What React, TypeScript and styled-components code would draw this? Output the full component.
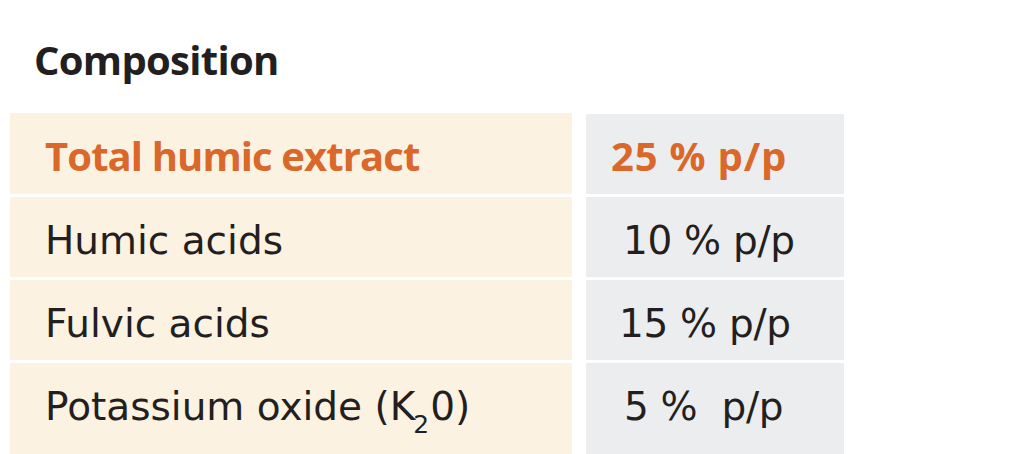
import styled, { createGlobalStyle } from 'styled-components';

const GlobalStyle = createGlobalStyle`
  html, body {
    margin: 0;
    padding: 0;
    background: #ffffff;
  }
  body {
    font-family: 'DejaVu Sans', sans-serif;
    color: #231f20;
  }
`;

const Page = styled.div`
  width: 1024px;
  height: 454px;
  overflow: hidden;
  background: #ffffff;
`;

const Title = styled.h2`
  margin: 0;
  padding: 40px 0 0 34px;
  font-family: 'Open Sans', sans-serif;
  font-weight: 700;
  font-size: 40px;
  line-height: 1;
  letter-spacing: -0.7px;
  color: #231f20;
`;

const Table = styled.div`
  display: grid;
  grid-template-columns: 562px 258px;
  grid-template-rows: 81px 80px 80px 94px;
  column-gap: 14px;
  row-gap: 3px;
  margin: 33px 0 0 10px;
`;

const Cell = styled.div<{ $strong?: boolean }>`
  box-sizing: border-box;
  padding-top: ${(p) => (p.$strong ? '23px' : '24px')};
  line-height: 1;
  white-space: pre;
  font-family: ${(p) =>
    p.$strong ? "'Open Sans', sans-serif" : "'DejaVu Sans', sans-serif"};
  font-weight: ${(p) => (p.$strong ? 700 : 400)};
  font-size: ${(p) => (p.$strong ? '40px' : '39px')};
  color: ${(p) => (p.$strong ? '#d9682a' : '#231f20')};
`;

const LabelCell = styled(Cell)`
  background: #fbf2e2;
  padding-left: 35px;
  letter-spacing: ${(p) => (p.$strong ? '-0.9px' : '0')};
`;

const ValueCell = styled(Cell)<{ $indent: number }>`
  background: #ecedef;
  padding-left: ${(p) => p.$indent}px;
  letter-spacing: ${(p) => (p.$strong ? '0.8px' : '-0.3px')};
  margin-top: ${(p) => (p.$strong ? '1px' : '0')};
  padding-top: ${(p) => (p.$strong ? '22px' : '24px')};
`;

const Sub = styled.span`
  position: relative;
  top: 13px;
  font-size: 0.64em;
  margin: 0 1px 0 -2px;
`;

type Row = {
  label: React.ReactNode;
  value: string;
  indent: number;
  strong?: boolean;
};

const rows: Row[] = [
  { label: 'Total humic extract', value: '25 % p/p', indent: 25, strong: true },
  { label: 'Humic acids', value: '10 % p/p', indent: 37 },
  { label: 'Fulvic acids', value: '15 % p/p', indent: 33 },
  {
    label: (
      <>
        Potassium oxide (K<Sub>2</Sub>0)
      </>
    ),
    value: '5 %\u00a0 p/p',
    indent: 38,
  },
];

export default function App() {
  return (
    <>
      <GlobalStyle />
      <Page>
        <Title>Composition</Title>
        <Table>
          {rows.map((r, i) => (
            <>
              <LabelCell key={`l${i}`} $strong={r.strong}>
                {r.label}
              </LabelCell>
              <ValueCell key={`v${i}`} $strong={r.strong} $indent={r.indent}>
                {r.value}
              </ValueCell>
            </>
          ))}
        </Table>
      </Page>
    </>
  );
}
